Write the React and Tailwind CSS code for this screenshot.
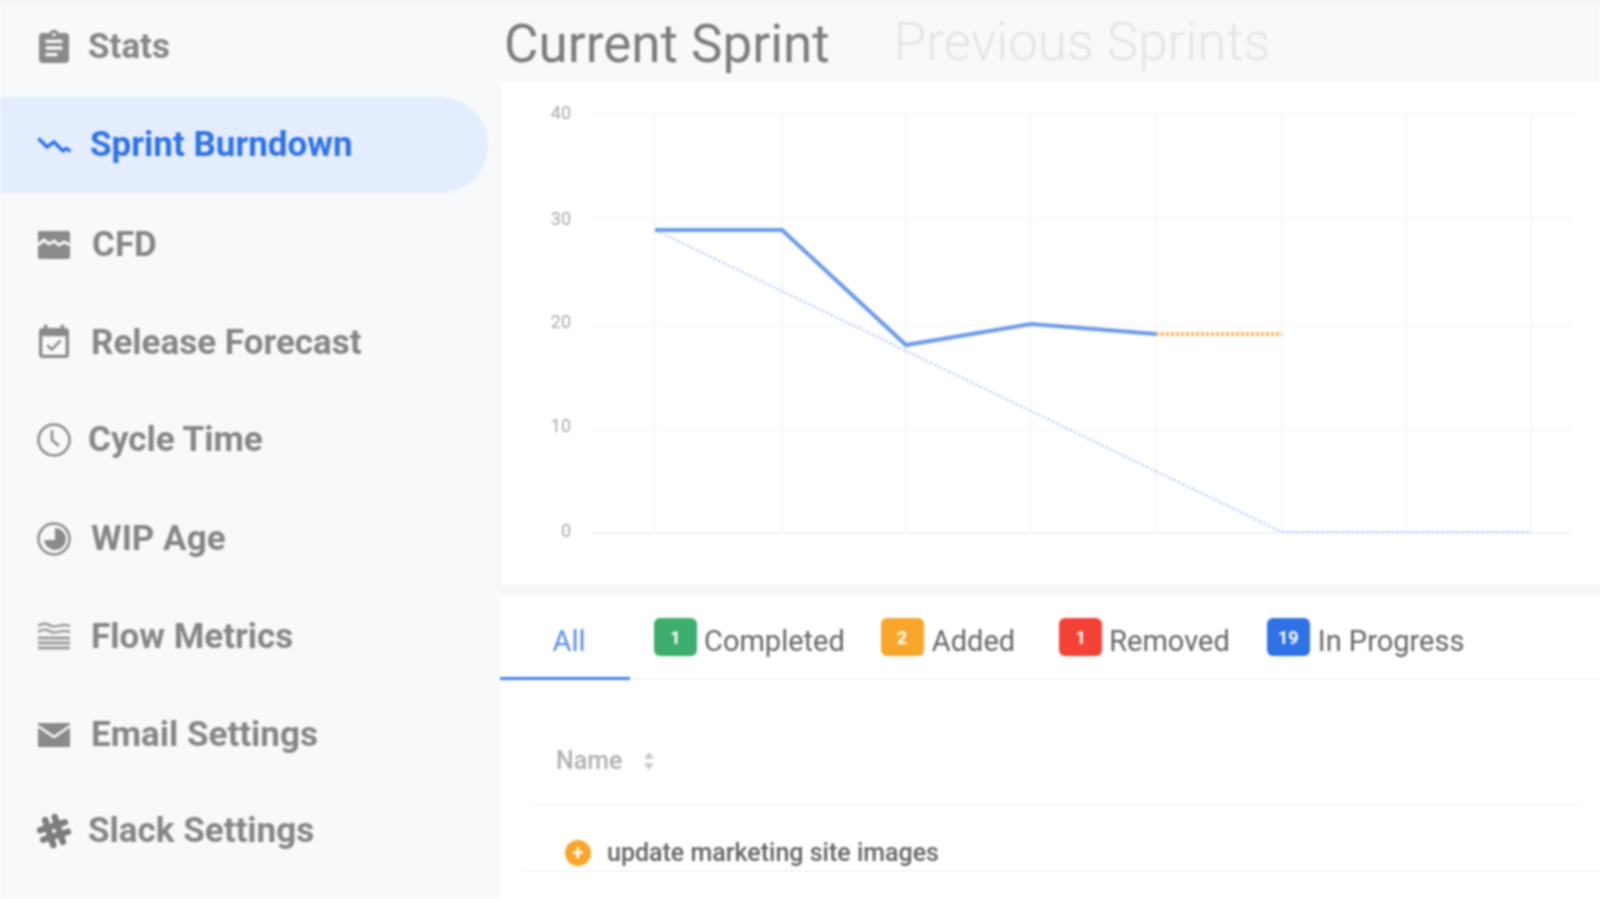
import React from "react";

const Stats = () => (
  <svg viewBox="0 0 24 24" className="w-10 h-10 fill-[#8a8a8a]">
    <path d="M19 3h-4.18C14.4 1.84 13.3 1 12 1c-1.3 0-2.4.84-2.82 2H5c-1.1 0-2 .9-2 2v14c0 1.1.9 2 2 2h14c1.1 0 2-.9 2-2V5c0-1.1-.9-2-2-2zm-7 0c.55 0 1 .45 1 1s-.45 1-1 1-1-.45-1-1 .45-1 1-1zm2 14H7v-2h7v2zm3-4H7v-2h10v2zm0-4H7V7h10v2z" />
  </svg>
);

const Burndown = () => (
  <svg viewBox="0 0 40 40" className="w-10 h-10 fill-none stroke-[#2f72e4]">
    <path d="M4.5 13.5 L13 22 L20 17 L29 26 L32 23.5 L36.5 26" strokeWidth="3.5" />
  </svg>
);

const Cfd = () => (
  <svg viewBox="0 0 40 40" className="w-10 h-10">
    <rect x="4" y="6" width="32" height="28" rx="2" fill="#8a8a8a" />
    <path d="M4 20 L10 15 L15 19 L20 16 L25 20 L30 17 L36 20" fill="none" stroke="#f8f9fb" strokeWidth="3" />
  </svg>
);

const Release = () => (
  <svg viewBox="0 0 24 24" className="w-10 h-10 fill-[#8a8a8a]">
    <path d="M16.53 11.06L15.47 10l-4.88 4.88-2.12-2.12-1.06 1.06L10.59 17l5.94-5.94zM19 3h-1V1h-2v2H8V1H6v2H5c-1.11 0-1.99.9-1.99 2L3 19c0 1.1.89 2 2 2h14c1.1 0 2-.9 2-2V5c0-1.1-.9-2-2-2zm0 16H5V8h14v11z" />
  </svg>
);

const Clock = () => (
  <svg viewBox="0 0 40 40" className="w-10 h-10 fill-none stroke-[#8a8a8a]">
    <circle cx="20" cy="20" r="15.5" strokeWidth="2.5" />
    <path d="M18 10 V20 L25 26" strokeWidth="2.5" />
  </svg>
);

const Wip = () => (
  <svg viewBox="0 0 40 40" className="w-10 h-10">
    <circle cx="20" cy="20" r="15.5" fill="none" stroke="#8a8a8a" strokeWidth="2.5" />
    <path d="M21 9 A11 11 0 1 1 10 21 L21 21 Z" fill="#8a8a8a" />
  </svg>
);

const Flow = () => (
  <svg viewBox="0 0 40 40" className="w-10 h-10 fill-none stroke-[#9a9a9a]">
    <path d="M4 9 C9 6 13 6 17 9 C22 11 27 6 36 9" strokeWidth="2.5" />
    <path d="M4 15 C9 12 13 12 17 15 C22 17 27 12 36 15" strokeWidth="2.5" />
    <path d="M4 21 H36" strokeWidth="3" />
    <path d="M4 26 H36" strokeWidth="3" />
    <path d="M4 31 H36" strokeWidth="3" />
  </svg>
);

const Email = () => (
  <svg viewBox="0 0 40 40" className="w-10 h-10">
    <path d="M4 8 H36 V32 H4 Z" fill="#8a8a8a" />
    <path d="M4 11 L20 22 L36 11" fill="none" stroke="#f8f9fb" strokeWidth="2.5" />
  </svg>
);

const Slack = () => (
  <svg viewBox="0 0 40 40" className="w-10 h-10 fill-none stroke-[#7c7c7c]">
    <g transform="rotate(-18 20 20)" strokeWidth="6.5" strokeLinecap="round">
      <path d="M15 7 V33" />
      <path d="M25 7 V33" />
      <path d="M7 15 H33" />
      <path d="M7 25 H33" />
    </g>
  </svg>
);

const navItems = [
  { label: "Stats", icon: <Stats />, gap: "gap-[14px]", box: "h-[89px]" },
  { label: "Sprint Burndown", icon: <Burndown />, gap: "gap-[16px]", box: "h-24 mt-[3px]", active: true },
  { label: "CFD", icon: <Cfd />, gap: "gap-[18px]", box: "h-24 mt-[2px]" },
  { label: "Release Forecast", icon: <Release />, gap: "gap-[17px]", box: "h-24" },
  { label: "Cycle Time", icon: <Clock />, gap: "gap-[14px]", box: "h-24 -mt-[1px]" },
  { label: "WIP Age", icon: <Wip />, gap: "gap-[17px]", box: "h-24 mt-[1px]" },
  { label: "Flow Metrics", icon: <Flow />, gap: "gap-[17px]", box: "h-24" },
  { label: "Email Settings", icon: <Email />, gap: "gap-[17px]", box: "h-24" },
  { label: "Slack Settings", icon: <Slack />, gap: "gap-[14px]", box: "h-24 -mt-[2px]" },
];

const hLines = [30, 136, 242, 346, 450];
const vLines = [155, 282, 406, 531, 656, 782, 906, 1031];

function BurndownChart() {
  return (
    <svg viewBox="0 0 1100 500" className="w-[1100px] h-[500px]">
      {hLines.map((y) => (
        <line key={y} x1="92" x2="1071" y1={y} y2={y} stroke={y === 450 ? "#eef1f7" : "#f6f6f6"} strokeWidth={y === 450 ? 2 : 1.5} />
      ))}
      {vLines.map((x) => (
        <line key={x} x1={x} x2={x} y1="30" y2="450" stroke="#f3f4f6" strokeWidth="1.5" />
      ))}
      {[["40", 30], ["30", 136], ["20", 239], ["10", 343], ["0", 448]].map(([t, y]) => (
        <text key={t} x="71" y={y + 6} textAnchor="end" fontSize="18" fill="#a8a8a8" fontFamily="Roboto, sans-serif">{t}</text>
      ))}
      <polyline points="155,147 782,449 1031,449" fill="none" stroke="#c6d7f5" strokeWidth="2.5" strokeDasharray="3 2" />
      <polyline points="155,147 282,147 406,262 531,241 656,251" fill="none" stroke="#6c9be8" strokeWidth="4" />
      <line x1="656" x2="782" y1="251" y2="251" stroke="#f5b26b" strokeWidth="4" strokeDasharray="3 2" />
    </svg>
  );
}

function Tab({ count, color, label, badgeMl, textMl }) {
  return (
    <div className={`flex items-center ${badgeMl}`}>
      <span className={`w-[43px] h-[38px] rounded-[6px] flex items-center justify-center text-white text-[18px] font-bold pt-[2px] ${color}`}>{count}</span>
      <span className={`text-[29px] text-[#666] pt-[10px] ${textMl}`}>{label}</span>
    </div>
  );
}

export default function App() {
  return (
    <div className="w-[1600px] h-[899px] overflow-hidden bg-[#f8f9fb] flex flex-col [font-family:Roboto,sans-serif] blur-[1px]">
      <div className="h-[3px] bg-[#f0f1f2] shrink-0" />
      <div className="flex flex-1 min-h-0">
        {/* Sidebar */}
        <nav className="w-[500px] shrink-0 flex flex-col gap-[2px]">
          {navItems.map((item) => (
            <div
              key={item.label}
              className={`flex items-center pl-[34px] w-[488px] rounded-r-[48px] ${item.box} ${item.gap} ${item.active ? "bg-[#e3edfd] text-[#2f72e4]" : "text-[#868686]"}`}
            >
              {item.icon}
              <span className="text-[35px] font-bold">{item.label}</span>
            </div>
          ))}
        </nav>

        {/* Main */}
        <main className="flex-1 min-w-0 flex flex-col">
          <div className="h-[80px] shrink-0 flex items-center pl-[4px] pt-[3px] gap-[64px]">
            <span className="text-[53px] text-[#7c7c7c]">Current Sprint</span>
            <span className="text-[53px] text-[#e3e4e6] font-light mb-[4px]">Previous Sprints</span>
          </div>

          <section className="h-[502px] shrink-0 bg-white shadow-[0_2px_3px_rgba(0,0,0,0.1)]">
            <BurndownChart />
          </section>

          <div className="h-[10px] shrink-0 bg-[#f4f5f6]" />

          <section className="flex-1 bg-white">
            <div className="h-[85px] flex items-center border-b-2 border-[#f5f5f5]">
              <div className="w-[130px] h-[85px] -mb-[2px] pl-[8px] pt-[12px] flex items-center justify-center border-b-[3px] border-[#4a80e8] text-[29px] text-[#5a8cea]">All</div>
              <Tab count="1" color="bg-[#3dae6b]" label="Completed" badgeMl="ml-[24px]" textMl="ml-[7px]" />
              <Tab count="2" color="bg-[#f8a62b]" label="Added" badgeMl="ml-[36px]" textMl="ml-[8px]" />
              <Tab count="1" color="bg-[#f44336]" label="Removed" badgeMl="ml-[44px]" textMl="ml-[7px]" />
              <Tab count="19" color="bg-[#2f72e4]" label="In Progress" badgeMl="ml-[37px]" textMl="ml-[8px]" />
            </div>

            <div className="ml-[30px] mr-[22px] h-[126px] pt-[38px] border-b-2 border-[#f5f5f5] flex items-center pl-[26px] text-[25px] font-medium text-[#b0b0b0]">
              <span>Name</span>
              <svg viewBox="0 0 12 20" className="w-3.5 h-6 ml-[20px] fill-[#c8c8c8]">
                <path d="M6 2 L10 8 H2 Z M6 18 L2 12 H10 Z" />
              </svg>
            </div>

            <div className="ml-[25px] h-[66px] pt-[30px] border-b-2 border-[#f5f5f5] flex items-center pl-[40px]">
              <span className="w-[26px] h-[26px] rounded-full bg-[#f8a62b] flex items-center justify-center text-white text-[20px] leading-none font-bold">+</span>
              <span className="ml-[16px] text-[25px] font-medium text-[#666]">update marketing site images</span>
            </div>
          </section>
        </main>
      </div>
    </div>
  );
}
